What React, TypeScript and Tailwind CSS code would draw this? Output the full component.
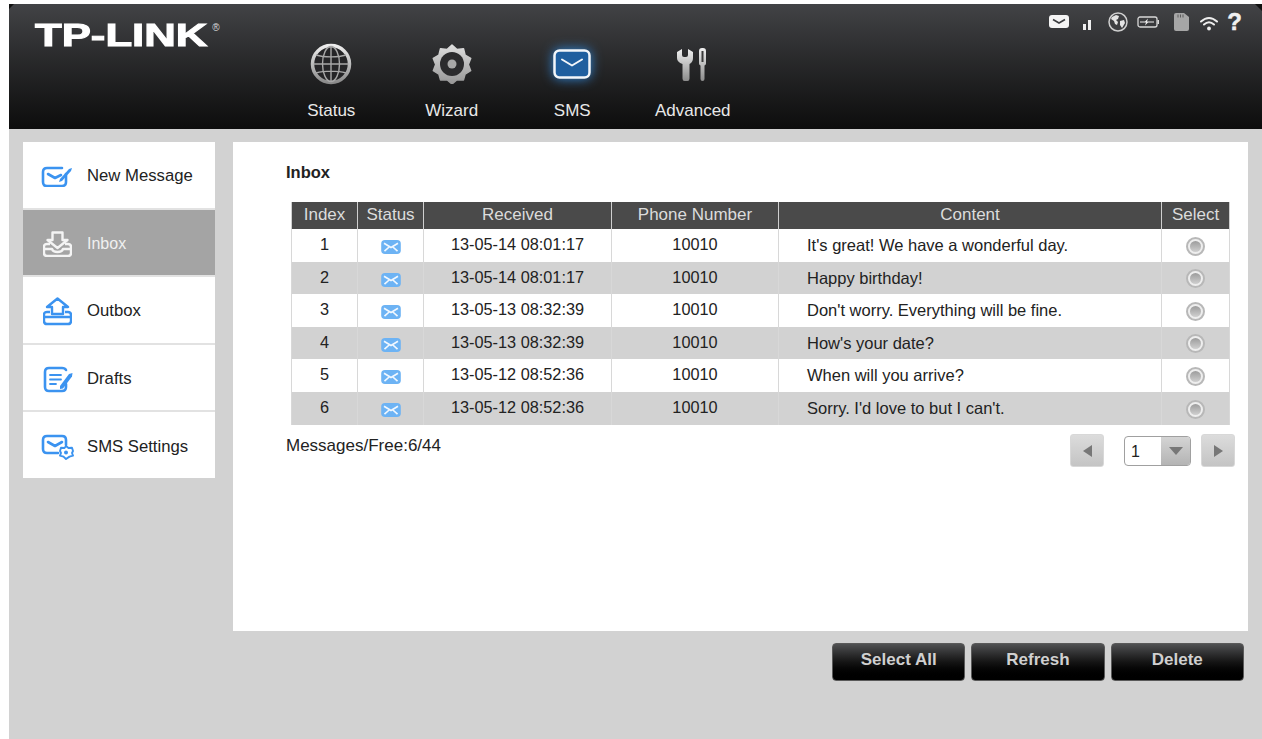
import type { ReactNode } from "react";

const MESSAGES = [
  { id: 1, time: "13-05-14 08:01:17", text: "It's great! We have a wonderful day.", h: "h-[33px]" },
  { id: 2, time: "13-05-14 08:01:17", text: "Happy birthday!", h: "h-[32px]" },
  { id: 3, time: "13-05-13 08:32:39", text: "Don't worry. Everything will be fine.", h: "h-[33px]" },
  { id: 4, time: "13-05-13 08:32:39", text: "How's your date?", h: "h-[32px]" },
  { id: 5, time: "13-05-12 08:52:36", text: "When will you arrive?", h: "h-[33px]" },
  { id: 6, time: "13-05-12 08:52:36", text: "Sorry. I'd love to but I can't.", h: "h-[33px]" },
];

function GlobeIcon() {
  return (
    <svg width="42" height="42" viewBox="0 0 42 42" fill="none">
      <defs>
        <linearGradient id="navGray" x1="0" y1="0" x2="0" y2="1">
          <stop offset="0" stopColor="#eeeeee" />
          <stop offset="1" stopColor="#8a8a8a" />
        </linearGradient>
      </defs>
      <circle cx="21" cy="21" r="18.5" fill="#252527" stroke="url(#navGray)" strokeWidth="3.500" />
      <g stroke="#a8a8a8" strokeWidth="1.400">
        <ellipse cx="21" cy="21" rx="8.5" ry="17.5" />
        <path d="M21 3.500v35M3.500 21h35M6 12c8 2.500 22 2.500 30 0M6 30c8-2.500 22-2.500 30 0" />
      </g>
    </svg>
  );
}

function WizardIcon() {
  return (
    <svg width="40" height="40" viewBox="0 0 40 40" fill="none">
      <defs>
        <linearGradient id="gearGray" x1="0" y1="0" x2="0" y2="1">
          <stop offset="0" stopColor="#dedede" />
          <stop offset="1" stopColor="#969696" />
        </linearGradient>
      </defs>
      <path
        d="M20 1l5 4.500 6.500-.8 1.600 6.400 5.600 3.400-2.400 6.100 2.400 6.100-5.600 3.400-1.600 5.800-6.500-.2-5 4.300-5-4.300-6.500.2-1.600-5.800-5.600-3.400 2.400-6.100-2.400-6.100 5.600-3.400 1.600-6.400 6.500.8z"
        fill="url(#gearGray)"
        stroke="url(#gearGray)"
        strokeWidth="1.500"
        strokeLinejoin="round"
      />
      <circle cx="20" cy="20" r="12" fill="#2b2b2d" />
      <circle cx="20" cy="20" r="4.500" fill="#a8a8a8" />
    </svg>
  );
}

function SmsNavIcon() {
  return (
    <svg width="38" height="30" viewBox="0 0 38 30" fill="none" className="drop-shadow-[0_0_6px_#2f86d8]">
      <rect x="1.500" y="1.500" width="35" height="27" rx="5" fill="#1f5f9f" stroke="#f2f6fa" strokeWidth="2.500" />
      <path d="M9 10.500l10 6 10-6" stroke="#f2f6fa" strokeWidth="2" strokeLinecap="round" strokeLinejoin="round" />
    </svg>
  );
}

function ToolsIcon() {
  return (
    <svg width="32" height="33" viewBox="0 0 32 33" fill="none">
      <defs>
        <linearGradient id="toolGray" x1="0" y1="0" x2="0" y2="1">
          <stop offset="0" stopColor="#f0f0f0" />
          <stop offset="1" stopColor="#8c8c8c" />
        </linearGradient>
      </defs>
      <path
        d="M0 4l5-3v6q0 2 2 2h2q2 0 2-2V1l5 3v6q0 4-3.500 6v14.500q0 2.500-2 2.500h-3q-2 0-2-2.500V16Q0 14 0 10z"
        fill="url(#toolGray)"
      />
      <path d="M22 3q0-3 3-3h1q3 0 3 3v12.500q0 1.500-1.500 2V31q0 2-2 2t-2-2V17.500q-1.500-.5-1.500-2z" fill="url(#toolGray)" />
      <rect x="24.500" y="3" width="2" height="11" fill="#3a3a3a" />
    </svg>
  );
}

function NavItem({ icon, label }: { icon: ReactNode; label: string }) {
  return (
    <div className="flex w-[120.500px] flex-col items-center">
      <div className="flex h-[42px] items-center justify-center">{icon}</div>
      <span className="mt-[16px] text-[17px] leading-[20px] text-[#e8e8e8]">{label}</span>
    </div>
  );
}

function StatusIcons() {
  return (
    <div className="ml-auto mr-[20px] mt-[8px] flex h-[20px] items-center">
      <svg width="20" height="13" viewBox="0 0 20 13" className="mb-[2px]">
        <rect width="20" height="13" rx="3" fill="#f4f4f4" />
        <path d="M4 4.500l6 3.500 6-3.500" stroke="#3b3c3f" strokeWidth="1.600" fill="none" />
      </svg>
      <svg width="8" height="10" viewBox="0 0 8 10" className="ml-[14px] mt-[5px]">
        <rect x="0" y="4" width="3" height="6" fill="#eeeeee" />
        <rect x="5" y="0" width="3" height="10" fill="#eeeeee" />
      </svg>
      <svg width="20" height="20" viewBox="0 0 20 20" className="ml-[17px]">
        <circle cx="10" cy="10" r="9" fill="#3d3e41" stroke="#cfcfcf" strokeWidth="1.500" />
        <path d="M4 5l4-2 3 1-1 3-2 1 2 2-1 3-2-1-1-3-3-2zM12 9l4-1 1 3-3 5-2-3z" fill="#e4e4e4" />
      </svg>
      <svg width="22" height="12" viewBox="0 0 22 12" className="ml-[9px] mb-[1px]">
        <rect x="1" y="1" width="19" height="10" rx="2" fill="none" stroke="#d8d8d8" strokeWidth="1.300" />
        <rect x="20.500" y="4" width="1.500" height="4" fill="#d8d8d8" />
        <path d="M3 5.500h5l3-3-1 3h7v1h-6l-3 3 1-3H3z" fill="#eeeeee" />
      </svg>
      <svg width="15" height="18" viewBox="0 0 15 18" className="ml-[15px]">
        <path d="M2 0h8l5 4v12q0 2-2 2H2q-2 0-2-2V2q0-2 2-2z" fill="#a6a6a6" />
        <path d="M4 1.500v3M6.500 1.500v3M9 1.500v3" stroke="#5c5c5c" strokeWidth="1" />
      </svg>
      <svg width="18" height="15" viewBox="0 0 18 15" fill="none" className="ml-[11px] mt-[2px]">
        <path d="M1 5.500q8-7 16 0M4 8.500q5-4.500 10 0" stroke="#eeeeee" strokeWidth="2" strokeLinecap="round" />
        <circle cx="9" cy="12.500" r="1.900" fill="#eeeeee" />
      </svg>
      <span className="ml-[9px] w-[15px] text-center text-[24px] font-bold leading-[20px] text-[#f0f0f0] [-webkit-text-stroke:0.5px_#f0f0f0]">
        ?
      </span>
    </div>
  );
}

function NewMessageIcon() {
  return (
    <svg width="33" height="22" viewBox="0 0 33 22" fill="none" stroke="#3b93f0" strokeWidth="2.600" strokeLinecap="round" strokeLinejoin="round">
      <path d="M25 9v8q0 4-4 4H6q-4 0-4-4V7q0-4 4-4h15" />
      <path d="M7 9l7 4 6-3" />
      <path d="M19 14l9-10 3-1-1 3-9 10-3 1z" fill="#3b93f0" stroke="none" />
    </svg>
  );
}

function InboxIcon() {
  return (
    <svg width="29" height="26" viewBox="0 0 29 26" fill="none" stroke="#f4f4f4" strokeWidth="2.400" strokeLinejoin="round">
      <path d="M9.500 1.500h10V9h5l-10 8-10-8h5z" />
      <path d="M7 13H4q-3 0-3 3v6q0 3 3 3h21q3 0 3-3v-6q0-3-3-3h-3M1 18h8q1 3 5.500 3T20 18h8" />
    </svg>
  );
}

function OutboxIcon() {
  return (
    <svg width="29" height="29" viewBox="0 0 29 29" fill="none" stroke="#3b93f0" strokeWidth="2.400" strokeLinejoin="round">
      <path d="M14.500 1.500L25 10h-5v7H9v-7H4z" />
      <path d="M7 15H4q-3 0-3 3v6q0 3 3 3h21q3 0 3-3v-6q0-3-3-3h-3M1 20h27" />
    </svg>
  );
}

function DraftsIcon() {
  return (
    <svg width="30" height="27" viewBox="0 0 30 27" fill="none" stroke="#3b93f0" strokeWidth="2.600" strokeLinecap="round" strokeLinejoin="round">
      <path d="M23 18v3q0 4-4 4H6q-4 0-4-4V6q0-4 4-4h13q3 0 4 2" />
      <path d="M7 9h11M7 13.500h11M7 18h6" strokeWidth="1.800" />
      <path d="M17 20l9-12 3.500-1-.5 3.500-9 12-3 .5z" fill="#3b93f0" stroke="none" />
    </svg>
  );
}

function SettingsIcon() {
  return (
    <svg width="34" height="26" viewBox="0 0 34 26" fill="none" stroke="#3b93f0" strokeWidth="2.600" strokeLinecap="round" strokeLinejoin="round">
      <path d="M17 19H6q-4 0-4-4V6q0-4 4-4h15q4 0 4 4v5" />
      <path d="M7 8l7 4 7-4" />
      <path d="M25 12l2.500 2 3.500-.2 1 3.200-1 2 1 2.600-3.500 1L25 25l-2.500-2.400-3.500-1 1-2.600-1-2 1-3.200 3.500.2z" strokeWidth="1.900" />
      <circle cx="25" cy="18.500" r="2" fill="#3b93f0" stroke="none" />
    </svg>
  );
}

function SideItem({ icon, label, active }: { icon: ReactNode; label: string; active?: boolean }) {
  return (
    <div className={active ? "flex h-[66px] items-center bg-[#a4a4a4]" : "flex h-[66px] items-center bg-white"}>
      <div className="flex w-[64px] shrink-0 justify-center pl-[5px] pt-[3px]">{icon}</div>
      <span className={active ? "pt-[3px] text-[16px] text-[#f0f0f0]" : "pt-[2px] text-[16.700px] text-[#222222]"}>{label}</span>
    </div>
  );
}

function EnvelopeBadge() {
  return (
    <svg width="20" height="14" viewBox="0 0 21 15" className="mx-auto mt-[3px]">
      <rect width="21" height="15" rx="4" fill="#6db3f4" />
      <path d="M3 3.500l7.500 4.500L18 3.500M3.500 12l5-4.500M17.500 12l-5-4.500" stroke="#f2f8ff" strokeWidth="1.800" fill="none" />
    </svg>
  );
}

function Radio() {
  return (
    <div className="mx-auto mt-[1px] flex size-[19px] items-center justify-center rounded-full border-2 border-[#b8b8b8] bg-[#eeeeee]">
      <div className="size-[11px] rounded-full bg-linear-to-b from-[#9c9c9c] to-[#d0d0d0]" />
    </div>
  );
}

function PagerButton({ dir }: { dir: "prev" | "next" }) {
  return (
    <div className="flex h-[33px] w-[34px] items-center justify-center rounded-[3px] border border-[#d8d8d8] bg-linear-to-b from-[#dcdcdc] to-[#c4c4c4]">
      {dir === "prev" ? (
        <div className="size-0 border-y-[6px] border-r-[9px] border-y-transparent border-r-[#777777]" />
      ) : (
        <div className="size-0 border-y-[6px] border-l-[9px] border-y-transparent border-l-[#777777]" />
      )}
    </div>
  );
}

function ActionButton({ label }: { label: string }) {
  return (
    <button className="h-[38px] flex-1 rounded-[4px] border border-[#5a5a5a] bg-linear-to-b from-[#505153] via-[#151515] to-black pb-[5px] text-[17px] font-bold text-[#d0d0d0]">
      {label}
    </button>
  );
}

export default function App() {
  return (
    <div className="h-[739px] w-[1262px] overflow-hidden bg-white pl-[9px] pt-[4px] font-['Liberation_Sans',Arial,sans-serif]">
      {/* Top bar */}
      <header className="relative flex h-[125px] bg-linear-to-b from-[#424346] to-[#0d0d0d]">
        <div className="absolute left-0 top-0 size-0 border-r-[5px] border-t-[5px] border-r-transparent border-t-[#111111]" />
        <div className="absolute right-0 top-0 size-0 border-l-[7px] border-t-[7px] border-l-transparent border-t-[#111111]" />
        <div className="w-[262px] shrink-0 pl-[26px] pt-[15px]">
          <span className="inline-block origin-left scale-x-[1.41] text-[31px] font-bold leading-[34px] text-white [-webkit-text-stroke:1px_white]">
            TP-LINK
          </span>
          <span className="ml-[55px] align-top text-[10px] leading-[18px] text-[#dddddd]">®</span>
        </div>
        <nav className="flex pt-[39px]">
          <NavItem icon={<GlobeIcon />} label="Status" />
          <NavItem icon={<WizardIcon />} label="Wizard" />
          <NavItem icon={<SmsNavIcon />} label="SMS" />
          <NavItem icon={<ToolsIcon />} label="Advanced" />
        </nav>
        <StatusIcons />
      </header>

      {/* Body */}
      <div className="flex h-[610px] bg-[#d2d2d2] pl-[14px] pt-[13px]">
        <aside className="flex h-[336px] w-[192px] shrink-0 flex-col gap-[2px] bg-[#e2e2e2]">
          <SideItem icon={<NewMessageIcon />} label="New Message" />
          <SideItem icon={<InboxIcon />} label="Inbox" active />
          <SideItem icon={<OutboxIcon />} label="Outbox" />
          <SideItem icon={<DraftsIcon />} label="Drafts" />
          <SideItem icon={<SettingsIcon />} label="SMS Settings" />
        </aside>

        <div className="ml-[18px] w-[1015px]">
          <main className="h-[489px] bg-white pl-[53px] pr-[13px] pt-[20px]">
            <h2 className="text-[16.500px] font-bold leading-[20px] text-[#222222]">Inbox</h2>
            <table className="ml-[5px] mt-[20px] w-[938px] table-fixed border-collapse text-[#222222]">
              <colgroup>
                <col className="w-[66px]" />
                <col className="w-[66px]" />
                <col className="w-[188px]" />
                <col className="w-[167px]" />
                <col className="w-[383px]" />
                <col className="w-[68px]" />
              </colgroup>
              <thead>
                <tr className="h-[27px] bg-[#4a4a4a] text-[17px] leading-[20px] text-[#dcdcdc]">
                  {["Index", "Status", "Received", "Phone Number", "Content", "Select"].map((h) => (
                    <th key={h} className="border-x border-[#cfcfcf] p-0 pb-[2px] font-normal">
                      {h}
                    </th>
                  ))}
                </tr>
              </thead>
              <tbody className="text-[16.300px]">
                {MESSAGES.map((m) => (
                  <tr key={m.id} className={`${m.h} ${m.id % 2 === 0 ? "bg-[#d2d2d2]" : "bg-white"}`}>
                    <td className="border-x border-[#d8d8d8] p-0 pb-[2px] text-center">{m.id}</td>
                    <td className="border-x border-[#d8d8d8] p-0">
                      <EnvelopeBadge />
                    </td>
                    <td className="border-x border-[#d8d8d8] p-0 pb-[2px] text-center">{m.time}</td>
                    <td className="border-x border-[#d8d8d8] p-0 pb-[2px] text-center">10010</td>
                    <td className="border-x border-[#d8d8d8] p-0 pl-[28px] text-[16.500px]">{m.text}</td>
                    <td className="border-x border-[#d8d8d8] p-0">
                      <Radio />
                    </td>
                  </tr>
                ))}
              </tbody>
            </table>
            <div className="mt-[9px] flex items-start justify-between">
              <span className="pt-[2px] text-[17px] leading-[20px] text-[#222222]">Messages/Free:6/44</span>
              <div className="flex items-center">
                <PagerButton dir="prev" />
                <div className="ml-[20px] mr-[10px] flex h-[30px] w-[67px] overflow-hidden rounded-[4px] border border-[#a0a0a0]">
                  <span className="w-[36px] pl-[6px] text-[16px] font-medium leading-[30px] text-[#222222]">1</span>
                  <div className="flex flex-1 items-center justify-center bg-linear-to-b from-[#d4d4d4] to-[#b4b4b4]">
                    <div className="size-0 border-x-[7px] border-t-[8px] border-x-transparent border-t-[#777777]" />
                  </div>
                </div>
                <PagerButton dir="next" />
              </div>
            </div>
          </main>
          <div className="ml-auto mr-[4px] mt-[12px] flex w-[412px] gap-[6px]">
            <ActionButton label="Select All" />
            <ActionButton label="Refresh" />
            <ActionButton label="Delete" />
          </div>
        </div>
      </div>
    </div>
  );
}
